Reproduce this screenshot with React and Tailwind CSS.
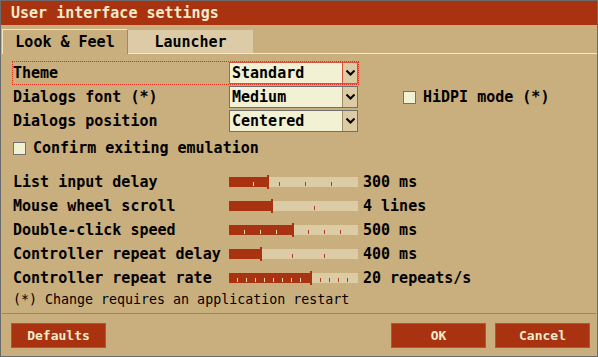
import React from 'react';

const MONO = "font-['DejaVu_Sans_Mono','Liberation_Mono',monospace]";

const SLIDERS = [
    { label: 'List input delay', value: '300 ms', fill: 39, light: [24], dark: [50, 76, 102] },
    { label: 'Mouse wheel scroll', value: '4 lines', fill: 43, light: [], dark: [85] },
    { label: 'Double-click speed', value: '500 ms', fill: 64, light: [15, 31, 47], dark: [79, 95, 111] },
    { label: 'Controller repeat delay', value: '400 ms', fill: 32, light: [], dark: [63, 95] },
    { label: 'Controller repeat rate', value: '20 repeats/s', fill: 82, light: [8, 17, 26, 35, 44, 53, 62, 71], dark: [91, 100, 109, 118] },
];

const Chevron = () => (
    <svg width="9" height="6" viewBox="0 0 9 6">
        <path d="M0.5 0.5 L4.5 4.5 L8.5 0.5" fill="none" stroke="#000" strokeWidth="2" />
    </svg>
);

const Dropdown = ({ value, focused = false }) => (
    <div className={`flex w-[129px] h-[22px] border ${focused ? 'border-[#d4533a]' : 'border-[#707070]'} bg-[#f3f1d4]`}>
        <span className="flex-1 pl-[2px] leading-[21px] font-bold text-[15px] text-black">{value}</span>
        <span className={`w-[15px] flex items-center justify-center bg-[#dccca6] border-l ${focused ? 'border-[#d4533a]' : 'border-[#a08c68]'}`}>
            <Chevron />
        </span>
    </div>
);

const Checkbox = ({ label }) => (
    <div className="flex items-center gap-[7px]">
        <span className="w-[13px] h-[13px] border border-[#727272] bg-[#f3f1d4]"></span>
        <span className="font-bold text-[15px] text-black">{label}</span>
    </div>
);

const Slider = ({ fill, light, dark }) => (
    <svg width="129" height="14" viewBox="0 0 129 14" className="block">
        <rect x="0" y="2" width="129" height="10" fill="#dccca6" />
        <rect x="0" y="2" width={fill - 1} height="10" fill="#a93211" />
        {light.map((x) => <rect key={'l' + x} x={x} y="7" width="1" height="4" fill="#eee4c4" />)}
        {dark.map((x) => <rect key={'d' + x} x={x} y="7" width="1" height="4" fill="#b63c18" />)}
        <rect x={fill - 1} y="0" width="2" height="14" fill="#a93211" />
    </svg>
);

const Button = ({ children }) => (
    <button className="w-[95px] h-[25px] border border-[#6e6e6e] bg-[#a93211] text-[#f3ecc9] font-bold text-[13px]">
        {children}
    </button>
);

export default function App() {
    return (
        <div className={`w-[598px] h-[357px] border border-[#6b6b6b] bg-[#c9ae7e] flex flex-col ${MONO}`}>
            {/* title */}
            <div className="h-[24px] bg-[#a93211] pl-[10px] flex items-center text-[#f3ecc9] font-bold text-[15px]">
                User interface settings
            </div>

            {/* tabs */}
            <div className="h-[29px] flex items-end">
                <div className="ml-[1px] w-[126px] h-[25px] border-t border-l border-r border-t-[#efe6c2] border-l-[#efe6c2] border-r-[#a08a62] flex items-center justify-center font-bold text-[15px] text-black">
                    Look &amp; Feel
                </div>
                <div className="flex-1 h-[24px] flex border-b border-[#f3ecc9]">
                    <div className="w-[125px] h-[23px] bg-[#dccba6] flex items-center justify-center pt-[2px] font-bold text-[15px] text-black">
                        Launcher
                    </div>
                </div>
            </div>

            {/* dropdown rows */}
            <div className="mt-[7px] ml-[11px] flex flex-col text-[15px] font-bold text-black">
                <div className="flex items-center w-[347px] h-[24px] border border-dotted border-[#dd2a1b]">
                    <span className="w-[216px] pt-px">Theme</span>
                    <Dropdown value="Standard" focused />
                </div>
                <div className="flex items-center">
                    <div className="flex items-center w-[347px] h-[24px] border border-transparent">
                        <span className="w-[216px] pt-px">Dialogs font (*)</span>
                        <Dropdown value="Medium" />
                    </div>
                    <div className="ml-[44px]">
                        <Checkbox label="HiDPI mode (*)" />
                    </div>
                </div>
                <div className="flex items-center w-[347px] h-[24px] border border-transparent">
                    <span className="w-[216px] pt-px">Dialogs position</span>
                    <Dropdown value="Centered" />
                </div>
            </div>

            <div className="mt-[3px] ml-[12px] h-[24px] flex items-center">
                <Checkbox label="Confirm exiting emulation" />
            </div>

            {/* sliders */}
            <div className="mt-[10px] ml-[12px] flex flex-col">
                {SLIDERS.map((s) => (
                    <div key={s.label} className="h-[24px] flex items-center font-bold text-[15px] text-black">
                        <span className="w-[216px]">{s.label}</span>
                        <Slider fill={s.fill} light={s.light} dark={s.dark} />
                        <span className="ml-[5px]">{s.value}</span>
                    </div>
                ))}
            </div>

            <div className="ml-[12px] h-[20px] flex items-center text-[13.3px] text-black">
                (*) Change requires an application restart
            </div>

            <div className="mt-[3px] mx-[1px] h-px bg-[#9c8660]"></div>

            <div className="pt-[9px] pl-[10px] pr-[7px] flex">
                <Button>Defaults</Button>
                <div className="flex-1"></div>
                <div className="flex gap-[9px]">
                    <Button>OK</Button>
                    <Button>Cancel</Button>
                </div>
            </div>
        </div>
    );
}
